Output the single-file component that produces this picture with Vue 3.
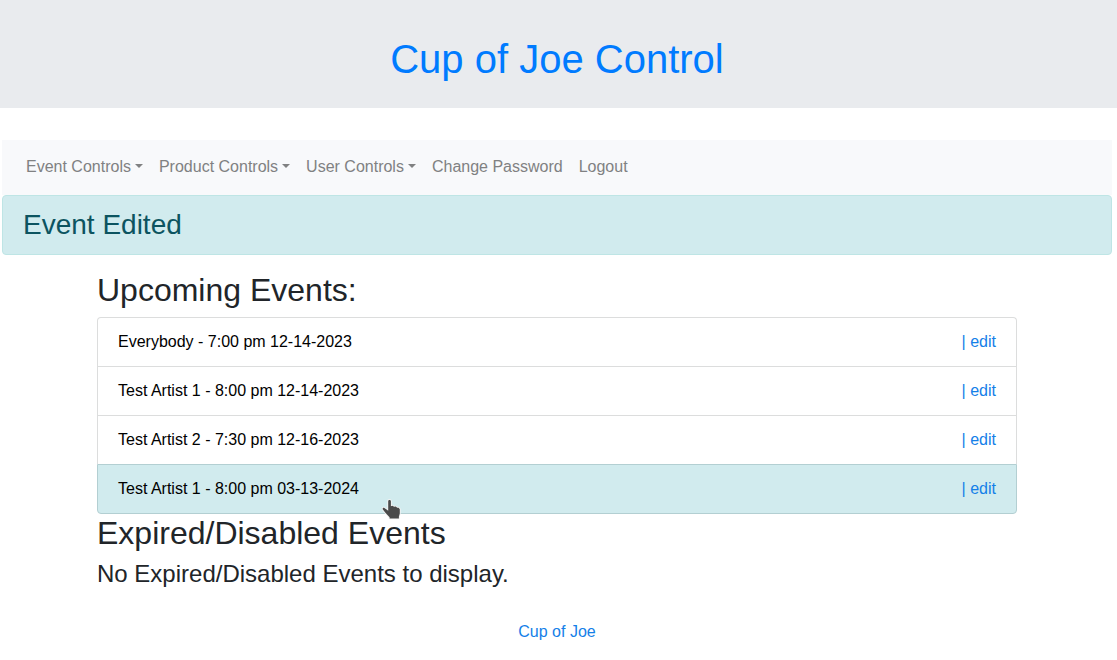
<script setup>
import { ref } from 'vue'

const menu = [
  { label: 'Event Controls', dropdown: true },
  { label: 'Product Controls', dropdown: true },
  { label: 'User Controls', dropdown: true },
  { label: 'Change Password', dropdown: false },
  { label: 'Logout', dropdown: false }
]

const events = ref([
  { id: 1, text: 'Everybody - 7:00 pm 12-14-2023', edited: false },
  { id: 2, text: 'Test Artist 1 - 8:00 pm 12-14-2023', edited: false },
  { id: 3, text: 'Test Artist 2 - 7:30 pm 12-16-2023', edited: false },
  { id: 4, text: 'Test Artist 1 - 8:00 pm 03-13-2024', edited: true }
])
</script>

<template>
  <div class="page">
    <header class="banner">
      <h1><a href="#">Cup of Joe Control</a></h1>
    </header>

    <div class="body">
      <nav class="navbar">
        <template v-for="item in menu" :key="item.label">
          <button v-if="item.dropdown" type="button" class="nav-link caret" aria-haspopup="true">{{ item.label }}</button>
          <a v-else href="#" class="nav-link">{{ item.label }}</a>
        </template>
      </nav>

      <div class="alert" role="alert">
        <h3>Event Edited</h3>
      </div>

      <main class="container">
        <h2>Upcoming Events:</h2>
        <ul class="list">
          <li v-for="event in events" :key="event.id" :class="{ edited: event.edited }">
            <span>{{ event.text }}</span>
            <a href="#">| edit</a>
          </li>
        </ul>
        <h2>Expired/Disabled Events</h2>
        <h4>No Expired/Disabled Events to display.</h4>
      </main>

      <footer class="footer"><a href="#">Cup of Joe</a></footer>
    </div>

    <svg class="pointer" width="20" height="22" viewBox="0 0 20 22" aria-hidden="true">
      <path
        d="M6.2 2.2C6.2 .6 8.8 .6 8.9 2.2V7.2L10.4 6.8L12.1 7.7L13.8 7.6L15.2 8.7L16.6 8.8L17.8 10.2V14.5L16.9 17.5V19.4H7.6V18.2L3.4 13.8L.7 10.3C.3 9.3 1.4 8.5 2.4 8.9L6.2 11.8Z"
        fill="#4a4a4a" stroke="#f2f2f2" stroke-width="1.8" stroke-linejoin="round" paint-order="stroke"
      />
    </svg>
  </div>
</template>

<style>
body {
  margin: 0;
  background: #fff;
}
</style>

<style scoped>
.page {
  position: relative;
  font: 16px/24px "Liberation Sans", Arial, sans-serif;
  color: #212529;
}

h1, h2, h3, h4 {
  margin: 0;
  font-weight: 400;
}

a {
  color: #007bff;
  text-decoration: none;
}

.banner {
  padding: 35px 5px 25px 2px;
  background: #e9ebee;
  text-align: center;
}

h1 {
  font-size: 40px;
  line-height: 48px;
}

.body {
  margin: 32px 5px 0 2px;
}

.navbar {
  display: flex;
  flex-wrap: wrap;
  padding: 7px 16px 8px;
  background: #f8f9fb;
}

.nav-link {
  padding: 8px;
  border: 0;
  background: none;
  color: #808182;
  font: inherit;
  white-space: nowrap;
  cursor: pointer;
}

.caret::after {
  content: "";
  display: inline-block;
  margin-left: 4px;
  vertical-align: 4px;
  border-top: 4px solid;
  border-right: 4px solid transparent;
  border-left: 4px solid transparent;
}

.alert {
  padding: 12px 20px;
  border: 1px solid #bee5e5;
  border-radius: 4px;
  background: #d1ebee;
  color: #0c5460;
}

h3 {
  font-size: 28px;
  line-height: 34px;
}

.container {
  max-width: 920px;
  margin: 16px auto 0;
}

h2 {
  padding-bottom: 8px;
  font-size: 32px;
  line-height: 38px;
}

.list {
  margin: 0;
  padding: 0;
  list-style: none;
}

.list li {
  display: flex;
  justify-content: space-between;
  padding: 12px 20px;
  border: 1px solid #dcdddd;
  border-bottom: 0;
  color: #000;
}

.list li:first-child {
  border-radius: 4px 4px 0 0;
}

.list li:last-child {
  border-bottom: 1px solid #dcdddd;
  border-radius: 0 0 4px 4px;
}

.list li.edited {
  border-color: #b3cfd2;
  background: #d1ebee;
}

h4 {
  font-size: 24px;
  line-height: 28px;
}

.list a,
.footer a {
  color: #1480e8;
}

.footer {
  padding: 32px 0 16px;
  text-align: center;
}

.pointer {
  position: absolute;
  top: 499px;
  left: 382px;
  pointer-events: none;
}
</style>
